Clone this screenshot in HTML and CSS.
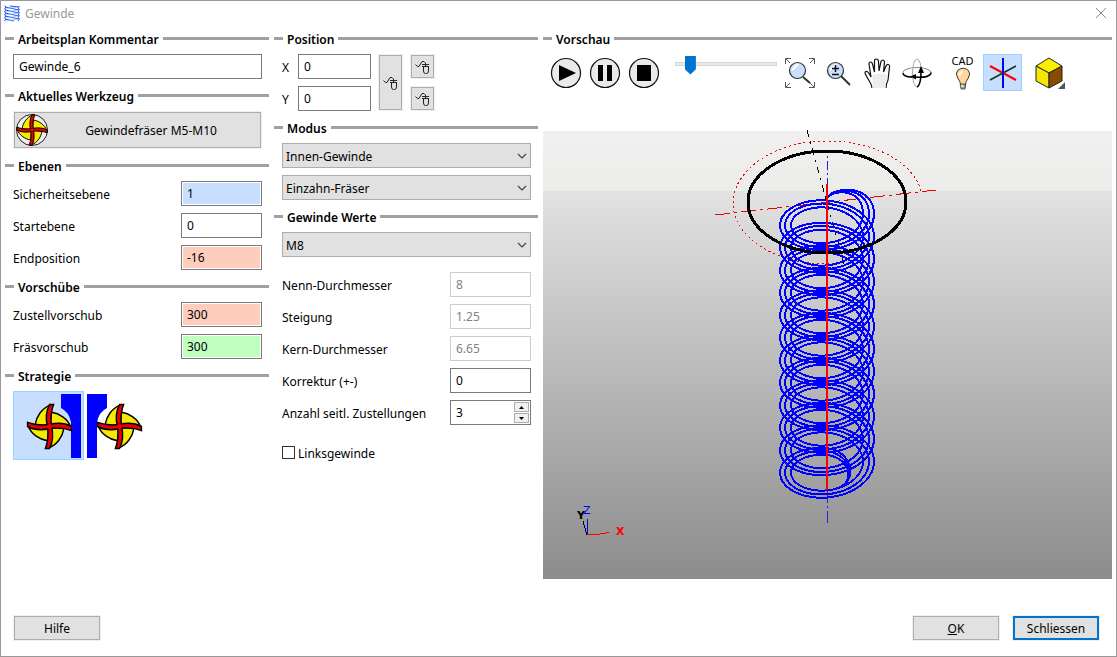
FILE: index.html
```html
<!DOCTYPE html>
<html lang="de">
<head>
  <meta charset="UTF-8">
  <meta name="viewport" content="width=device-width, initial-scale=1.0">
  <title>Gewinde</title>
  <link rel="stylesheet" href="styles.css">
</head>
<body>
<svg class="defs" width="0" height="0" aria-hidden="true">
  <symbol id="cutter" viewBox="-24 -24 48 48">
    <path id="blade" d="M0 0 L-14 -2 C-13 -9 -8 -18 1 -21 Z" fill="#f4ec00" stroke="#000" stroke-width="1.4"/>
    <use href="#blade" transform="rotate(90)"/>
    <use href="#blade" transform="rotate(180)"/>
    <use href="#blade" transform="rotate(270)"/>
    <path id="arm" d="M-2 0 C-4 -8 -3 -16 0 -21.500 L4 -21.500 C1 -14 1 -8 2 0" fill="#e60000" stroke="#000" stroke-width="1.4"/>
    <use href="#arm" transform="rotate(90)"/>
    <use href="#arm" transform="rotate(180)"/>
    <use href="#arm" transform="rotate(270)"/>
    <circle r="2.5" fill="#e60000"/>
  </symbol>
  <symbol id="mouse" viewBox="0 0 16 16">
    <path d="M0.500 5.500 L2.500 7.500 H4 L7 2.500 H9 L10.500 4 V5" fill="none" stroke="#222"/>
    <path d="M8.500 7.500 V12 Q8.500 14.500 10.500 14.500 H11.500 Q13.500 14.500 13.500 12 V7.500 M7 5.500 H14 M7 7.500 H14 M10.500 4 V7.500" fill="none" stroke="#222"/>
  </symbol>
  <symbol id="chevron" viewBox="0 0 10 6">
    <path d="M1 1 L5 5 L9 1" fill="none" stroke="#444" stroke-width="1.200"/>
  </symbol>
</svg>

<div class="dialog">
  <header class="titlebar">
    <svg class="app-icon" viewBox="0 0 16 17" fill="none" stroke="#1f55e8">
      <path d="M1 2 L15 5 M1 5 L15 8 M1 8 L15 11 M1 11 L15 14 M1 14 L10 16 M6 1 L15 2"/>
      <path d="M0.500 1 L2 2 L0.500 4 L2 5 L0.500 7 L2 8 L0.500 10 L2 11 L0.500 13 L2 14 L0.500 16 M15.500 1 L14 3 L15.500 5 L14 6 L15.500 8 L14 9 L15.500 11 L14 12 L15.500 14 L14 16"/>
      <path d="M1 4 L15 2 M1 7 L15 5 M1 10 L15 8 M1 13 L15 11 M1 16 L15 14" stroke="#8db4ff" stroke-width="0.600"/>
    </svg>
    <h1>Gewinde</h1>
    <button type="button" class="close" aria-label="Fenster schließen">
      <svg viewBox="0 0 12 12" width="12" height="12"><path d="M1 1 L11 11 M11 1 L1 11" stroke="#888" fill="none"/></svg>
    </button>
  </header>

  <main class="columns">
    <section class="column">
      <h2><label for="comment">Arbeitsplan Kommentar</label></h2>
      <div class="group">
        <input class="field wide" id="comment" type="text" value="Gewinde_6">
      </div>

      <h2>Aktuelles Werkzeug</h2>
      <div class="group">
        <button type="button" class="btn tool-btn">
          <svg class="tool-icon" viewBox="0 0 34 34">
            <circle cx="17" cy="17" r="15.500" fill="#eee" stroke="#222"/>
            <use href="#cutter" x="0" y="0" width="34" height="34"/>
          </svg>
          <span>Gewindefräser M5-M10</span>
        </button>
      </div>

      <h2>Ebenen</h2>
      <div class="group">
        <div class="row">
          <label for="safe">Sicherheitsebene</label>
          <input class="field blue" id="safe" type="text" value="1">
        </div>
        <div class="row">
          <label for="start">Startebene</label>
          <input class="field" id="start" type="text" value="0">
        </div>
        <div class="row">
          <label for="end">Endposition</label>
          <input class="field red" id="end" type="text" value="-16">
        </div>
      </div>

      <h2>Vorschübe</h2>
      <div class="group">
        <div class="row">
          <label for="feed-in">Zustellvorschub</label>
          <input class="field red" id="feed-in" type="text" value="300">
        </div>
        <div class="row">
          <label for="feed-mill">Fräsvorschub</label>
          <input class="field green" id="feed-mill" type="text" value="300">
        </div>
      </div>

      <h2>Strategie</h2>
      <div class="strategy">
        <button type="button" class="strategy-btn active" aria-label="Gleichlauf">
          <svg viewBox="0 0 69 67">
            <path d="M47 2 H67 V66 H57 V30 Q55 20 47 16 Z" fill="#00f"/>
            <use href="#cutter" x="11" y="10" width="49" height="49"/>
          </svg>
        </button>
        <button type="button" class="strategy-btn" aria-label="Gegenlauf">
          <svg viewBox="0 0 69 67">
            <path d="M2 2 H22 V16 Q14 20 12 30 V66 H2 Z" fill="#00f"/>
            <use href="#cutter" x="10" y="10" width="49" height="49"/>
          </svg>
        </button>
      </div>
    </section>

    <section class="column">
      <h2>Position</h2>
      <div class="group position">
        <div class="coords">
          <div class="coord">
            <label for="pos-x">X</label>
            <input class="field" id="pos-x" type="text" value="0">
          </div>
          <div class="coord">
            <label for="pos-y">Y</label>
            <input class="field" id="pos-y" type="text" value="0">
          </div>
        </div>
        <button type="button" class="btn pick tall" aria-label="X und Y wählen"><svg><use href="#mouse"/></svg></button>
        <div class="picks">
          <button type="button" class="btn pick" aria-label="X wählen"><svg><use href="#mouse"/></svg></button>
          <button type="button" class="btn pick" aria-label="Y wählen"><svg><use href="#mouse"/></svg></button>
        </div>
      </div>

      <h2>Modus</h2>
      <div class="group">
        <div class="select">
          <select aria-label="Gewindeart"><option>Innen-Gewinde</option><option>Außen-Gewinde</option></select>
          <svg><use href="#chevron"/></svg>
        </div>
        <div class="select">
          <select aria-label="Fräserart"><option>Einzahn-Fräser</option><option>Mehrzahn-Fräser</option></select>
          <svg><use href="#chevron"/></svg>
        </div>
      </div>

      <h2>Gewinde Werte</h2>
      <div class="group">
        <div class="select">
          <select aria-label="Gewindegröße"><option>M8</option><option>M10</option></select>
          <svg><use href="#chevron"/></svg>
        </div>
      </div>
      <div class="group values">
        <div class="row">
          <label for="nominal">Nenn-Durchmesser</label>
          <input class="field" id="nominal" type="text" value="8" disabled>
        </div>
        <div class="row">
          <label for="pitch">Steigung</label>
          <input class="field" id="pitch" type="text" value="1.25" disabled>
        </div>
        <div class="row">
          <label for="core">Kern-Durchmesser</label>
          <input class="field" id="core" type="text" value="6.65" disabled>
        </div>
        <div class="row">
          <label for="correction">Korrektur (+-)</label>
          <input class="field" id="correction" type="text" value="0">
        </div>
        <div class="row">
          <label for="passes">Anzahl seitl. Zustellungen</label>
          <div class="spinner">
            <input class="field" id="passes" type="number" value="3" min="1">
            <div class="spin-buttons">
              <button type="button" id="passes-up" aria-label="Mehr"><svg viewBox="0 0 5 3"><path d="M0 3 L2.500 0 L5 3 Z"/></svg></button>
              <button type="button" id="passes-down" aria-label="Weniger"><svg viewBox="0 0 5 3"><path d="M0 0 L2.500 3 L5 0 Z"/></svg></button>
            </div>
          </div>
        </div>
      </div>
      <label class="check"><input type="checkbox"><span>Linksgewinde</span></label>
    </section>

    <section class="column preview">
      <h2>Vorschau</h2>
      <div class="toolbar">
        <button type="button" class="icon-btn" aria-label="Start">
          <svg viewBox="0 0 32 32"><circle cx="16" cy="16" r="14.500" fill="#eaeaea" stroke="#111" stroke-width="1.200"/><path d="M9 8 V24 L26 16 Z"/></svg>
        </button>
        <button type="button" class="icon-btn" aria-label="Pause">
          <svg viewBox="0 0 32 32"><circle cx="16" cy="16" r="14.500" fill="#eaeaea" stroke="#111" stroke-width="1.200"/><path d="M9 8 H14 V24 H9 Z M18 8 H23 V24 H18 Z"/></svg>
        </button>
        <button type="button" class="icon-btn" aria-label="Stopp">
          <svg viewBox="0 0 32 32"><circle cx="16" cy="16" r="14.500" fill="#eaeaea" stroke="#111" stroke-width="1.200"/><path d="M9 8 H23 V24 H9 Z"/></svg>
        </button>
        <input class="speed" type="range" min="0" max="100" value="10" aria-label="Geschwindigkeit">
        <button type="button" class="icon-btn" aria-label="Alles zeigen">
          <svg viewBox="0 0 32 32" fill="none">
            <path d="M1.500 7 V1.500 H7 M2 2 L6 6 M25 1.500 H30.500 V7 M30 2 L26 6 M1.500 25 V30.500 H7 M2 30 L6 26 M25 30.500 H30.500 V25 M30 30 L26 26" stroke="#555"/>
            <path d="M19 20 L26 26" stroke="#333" stroke-width="2"/>
            <circle cx="13.500" cy="13.500" r="8" fill="#cbdffc" stroke="#333" stroke-width="1.200"/>
            <path d="M8 13 L14 7" stroke="#fff" stroke-width="2"/>
          </svg>
        </button>
        <button type="button" class="icon-btn" aria-label="Zoom">
          <svg viewBox="0 0 32 32" fill="none">
            <path d="M18 19 L27 28" stroke="#333" stroke-width="2"/>
            <circle cx="12.500" cy="13.500" r="8" fill="#cbdffc" stroke="#333" stroke-width="1.200"/>
            <path d="M7 13 L13 7" stroke="#fff" stroke-width="2"/>
            <path d="M12.500 8 V15 M9 11.500 H16 M9 17.500 H16" stroke="#111" stroke-width="1.500"/>
          </svg>
        </button>
        <button type="button" class="icon-btn" aria-label="Verschieben">
          <svg viewBox="0 0 32 32">
            <path d="M10 31 C10 27 6 23 4 18 Q2 15 4 14.500 Q6 14 9 20 L7 7 Q7 5 8.500 5 Q10 5 10.500 7 L12.500 15 V4 Q12.500 2 14.500 2 Q16 2 16.500 4 L17 14 L19 4.500 Q19.500 3 21 3 Q22.500 3.500 22.500 5 L21.500 15 L24 9 Q25 7 26.500 7.500 Q28 8 27.500 10 L26 23 Q24 27 24 31" fill="#fff" stroke="#111" stroke-width="1.200"/>
            <path d="M10.500 18 Q18 15 25.500 18 L25 24 Q23 27 23.500 31 H10.500 Z" fill="#ededed"/>
          </svg>
        </button>
        <button type="button" class="icon-btn" aria-label="Drehen">
          <svg viewBox="0 0 32 32" fill="none">
            <ellipse cx="16" cy="15.500" rx="14" ry="5" stroke="#888"/>
            <ellipse cx="16" cy="16" rx="4.500" ry="14" stroke="#aaa"/>
            <path d="M2 16 C2 19 6 20 11 20 M15 20 C24 21 30 19 30 15.500 M20 14 Q20 28 16 30" stroke="#000" stroke-width="1.500"/>
            <path d="M9 19.500 L15 17 V22.500 Z M20 9 L17 16 H23 Z" fill="#000"/>
          </svg>
        </button>
        <button type="button" class="icon-btn cad" aria-label="CAD einblenden">
          <span>CAD</span>
          <svg viewBox="0 0 16 24">
            <path d="M5.500 18 Q5 15 2.500 11.500 Q-0.500 7 2.500 3.500 Q8 -1 13.500 3.500 Q16.500 7 13.500 11.500 Q11 15 10.500 18 Z" fill="#ffd79a" stroke="#333"/>
            <path d="M3 8 Q4 4 8 4 Q8 8 4 10 Z" fill="#fff3dd"/>
            <path d="M5 18 H11 L10 23 H6 Z" fill="#999" stroke="#333" stroke-width="0.800"/>
            <path d="M6 18.500 H8.500 V21 H6 Z" fill="#dfff8a"/>
          </svg>
        </button>
        <button type="button" class="icon-btn axes active" aria-label="Achsen einblenden">
          <svg viewBox="0 0 32 32" fill="none">
            <path d="M3 23 L29 9" stroke="#123512" stroke-width="1.500"/>
            <path d="M3 9 L29 23" stroke="#f00" stroke-width="2"/>
            <path d="M16 1 V31" stroke="#00f" stroke-width="2"/>
          </svg>
        </button>
        <button type="button" class="icon-btn cube" aria-label="Ansicht">
          <svg viewBox="0 0 32 32" stroke="#222">
            <path d="M2 9 L15 1 L28 9 L15 16 Z" fill="#f8f000"/>
            <path d="M2 9 L15 16 V31 L2 24 Z" fill="#f4e800"/>
            <path d="M28 9 L15 16 V31 L28 24 Z" fill="#8a4b00"/>
            <path d="M31 25 V32 H24 Z" fill="#555" stroke="none"/>
          </svg>
        </button>
      </div>

      <div class="viewport">
        <svg viewBox="0 0 569 448" fill="none" shape-rendering="crispEdges" role="img" aria-label="Werkzeugweg">
          <path d="M378 60 C370 30 330 10 284 10 C230 10 190 40 190 72 C190 105 230 133 284 133 C292 133 298 132 304 130" stroke="#e00" stroke-dasharray="2 3"/>
          <path d="M172 84 L393 59" stroke="#e00" stroke-dasharray="15 4 3 4"/>
          <path d="M264 -1 L304 144" stroke="#000" stroke-dasharray="7 5 2 5"/>
          <path d="M284.500 25 V60" stroke="#22d" stroke-dasharray="2 3 9 3"/>
          <path d="M284.500 358 V392" stroke="#22d" stroke-dasharray="14 3 2 3"/>
          <g id="toolpath" stroke="#00f" stroke-width="2"></g>
          <ellipse cx="284" cy="71" rx="79" ry="51" stroke="#000" stroke-width="3"/>
          <path d="M284 53 V359" stroke="#f00" stroke-width="2"/>
          <path d="M44.500 404 V388" stroke="#00f"/>
          <path d="M44 403.500 H54 L66 401.500" stroke="#f00"/>
          <path d="M44 404 L40 390" stroke="#000"/>
          <text x="73" y="404" class="axis-label" fill="#f00">X</text>
          <text x="34" y="388" class="axis-label" fill="#000">Y</text>
          <text x="40" y="383" class="axis-label z" fill="#00f">Z</text>
        </svg>
      </div>
    </section>
  </main>

  <footer class="buttons">
    <button type="button" class="btn">Hilfe</button>
    <span class="spacer"></span>
    <button type="button" class="btn"><u>O</u>K</button>
    <button type="button" class="btn default">Schliessen</button>
  </footer>
</div>

<script src="script.js"></script>
</body>
</html>
```
FILE: styles.css
```css
* {
  box-sizing: border-box;
}
body {
  margin: 0;
  font-family: "Noto Sans", "Open Sans", sans-serif;
  font-size: 12px;
  line-height: 17px;
  color: #000;
  background: #fff;
}
button, input, select {
  font: inherit;
  color: inherit;
  margin: 0;
}
svg {
  display: block;
}
.defs {
  position: absolute;
}
.dialog {
  display: flex;
  flex-direction: column;
  min-height: 100vh;
  border: 1px solid #999;
}

/* title bar */
.titlebar {
  display: flex;
  align-items: center;
  gap: 5px;
  height: 24px;
  padding: 0 9px 0 3px;
}
.app-icon {
  width: 16px;
  height: 17px;
}
.titlebar h1 {
  flex: 1;
  margin: 0;
  font-size: 12px;
  font-weight: normal;
  color: #999;
}
.close {
  padding: 0;
  border: none;
  background: none;
}

/* columns */
.columns {
  flex: 1;
  display: grid;
  grid-template-columns: 264px 264px 1fr;
  gap: 5px;
  padding: 5px 4px 0;
}
.column {
  display: flex;
  flex-direction: column;
  min-width: 0;
}
h2 {
  display: flex;
  align-items: center;
  gap: 4px;
  margin: 8px 0 6px;
  padding-top: 1px;
  font-size: 12px;
  line-height: 17px;
  font-weight: 600;
}
h2:first-child {
  margin-top: 0;
}
h2::before, h2::after {
  content: "";
  height: 3px;
  margin-bottom: 2px;
  background: #a0a0a0;
}
h2::before {
  width: 9px;
}
h2::after {
  flex: 1;
}
.group {
  display: flex;
  flex-direction: column;
  gap: 7px;
  padding: 0 7px 0 8px;
}
.values {
  margin-top: 15px;
}
.row {
  display: flex;
  align-items: center;
  justify-content: space-between;
}
.row label, .coord label, .check span {
  padding-top: 2px;
}

/* fields */
.field {
  width: 81px;
  height: 25px;
  padding: 0 5px;
  border: 1px solid #7a7a7a;
  border-radius: 0;
  background: #fff;
  box-shadow: inset 0 0 0 1px #fff;
}
.field.wide {
  width: 100%;
}
.field.blue { background: #c8deff; }
.field.red { background: #ffcdbc; }
.field.green { background: #bfffbf; }
.field:disabled {
  border-color: #ccc;
  color: #838383;
}
.btn {
  min-width: 88px;
  height: 26px;
  padding: 0;
  border: 1px solid #f0f0f0;
  background: #e1e1e1;
  box-shadow: inset 0 0 0 1px #adadad;
}
.btn.default {
  box-shadow: inset 0 0 0 2px #0073cf;
}
.tool-btn {
  display: flex;
  align-items: center;
  width: 100%;
  height: 38px;
}
.tool-icon {
  width: 34px;
  height: 34px;
  margin-left: 1px;
}
.tool-btn span {
  flex: 1;
  padding-right: 8px;
}
.position {
  flex-direction: row;
  gap: 7px;
}
.coords, .picks {
  display: flex;
  flex-direction: column;
  gap: 7px;
}
.coord {
  display: flex;
  align-items: center;
}
.coord label {
  width: 16px;
}
.coord .field {
  width: 73px;
}
.pick {
  display: flex;
  align-items: center;
  justify-content: center;
  min-width: 25px;
  height: 25px;
}
.pick.tall {
  height: auto;
}
.pick svg {
  width: 16px;
  height: 16px;
}
.select {
  position: relative;
}
.select select {
  display: block;
  width: 100%;
  height: 25px;
  padding: 2px 20px 0 3px;
  border: 1px solid #adadad;
  border-radius: 0;
  background: #e1e1e1;
  appearance: none;
}
.select svg {
  position: absolute;
  top: 10px;
  right: 4px;
  width: 10px;
  height: 6px;
  pointer-events: none;
}
.spinner {
  display: flex;
  width: 81px;
  height: 25px;
  border: 1px solid #7a7a7a;
}
.spinner .field {
  flex: 1;
  width: 0;
  height: 23px;
  border: none;
  appearance: textfield;
}
.spinner .field::-webkit-inner-spin-button {
  display: none;
}
.spin-buttons {
  display: flex;
  flex-direction: column;
  gap: 1px;
  width: 17px;
  padding: 1px;
}
.spin-buttons button {
  display: flex;
  flex: 1;
  align-items: center;
  justify-content: center;
  padding: 0;
  border: 1px solid #adadad;
  background: #f0f0f0;
}
.spin-buttons svg {
  width: 5px;
  height: 3px;
}
.check {
  display: flex;
  align-items: center;
  gap: 3px;
  margin: 18px 8px 0;
}
.check input {
  width: 13px;
  height: 13px;
  border: 1px solid #333;
  background: #fff;
  appearance: none;
}
.check input:checked {
  background: #333;
  box-shadow: inset 0 0 0 2px #fff;
}
.strategy {
  display: flex;
  padding-left: 8px;
}
.strategy-btn {
  width: 71px;
  height: 69px;
  padding: 0;
  border: 1px solid transparent;
  background: none;
}
.strategy-btn.active, .icon-btn.active {
  border-color: #99d1ff;
  background: #c8deff;
}

/* preview */
.toolbar {
  display: flex;
  align-items: center;
  height: 37px;
  padding-left: 3px;
}
.icon-btn {
  display: flex;
  flex-direction: column;
  align-items: center;
  justify-content: center;
  flex: none;
  width: 39px;
  height: 37px;
  padding: 0;
  border: 1px solid transparent;
  background: none;
}
.icon-btn svg {
  width: 32px;
  height: 32px;
}
.icon-btn.cad {
  margin-left: 7px;
  font-size: 11px;
  line-height: 12px;
}
.icon-btn.cad svg {
  width: 16px;
  height: 24px;
}
.icon-btn.axes {
  margin-left: 1px;
}
.icon-btn.cube {
  margin-left: 8px;
}
.speed {
  width: 102px;
  height: 20px;
  margin: 0 3px 18px 12px;
  background: none;
  appearance: none;
}
.speed::-webkit-slider-runnable-track {
  height: 4px;
  border: 1px solid #d6d6d6;
  background: #e7eaea;
}
.speed::-webkit-slider-thumb {
  width: 11px;
  height: 19px;
  margin-top: -7px;
  background: #0073cf;
  clip-path: polygon(0 0, 100% 0, 100% 72%, 50% 100%, 0 72%);
  appearance: none;
}
.viewport {
  flex: 1;
  min-height: 0;
  margin-top: 40px;
  background: linear-gradient(#f0f0f0, #ececea 60px, #e2e2e2 60px, #8c8c8c);
}
.viewport svg {
  width: 100%;
  height: auto;
  overflow: visible;
}
.axis-label {
  font: bold 11px "DejaVu Sans", sans-serif;
}
.axis-label.z {
  font-weight: normal;
}

/* footer */
.buttons {
  display: flex;
  gap: 12px;
  padding: 36px 16px 15px 12px;
}
.spacer {
  flex: 1;
}
```
FILE: script.js
```javascript
const toolpath = document.getElementById('toolpath');
const passes = document.getElementById('passes');

// one helix per pass, each a little closer to the final diameter
function drawPass(rx) {
  const cx = 284;
  const ry = rx * 0.646;
  const rise = 22.5;
  const end = 23.5 * Math.PI;
  const top = 54 + (47 - rx) / 3;
  let d = `M${cx} 67 C${cx + 8} ${top} ${cx + rx} ${top} ${cx + rx} 83`;
  for (let t = 0; t <= end; t += Math.PI / 30) {
    const x = cx + rx * Math.cos(t);
    const y = 83 + rise * t / (2 * Math.PI) + ry * Math.sin(t);
    d += ` L${x.toFixed(1)} ${y.toFixed(1)}`;
  }
  const r = 17 + rx / 4;
  d += ` C${cx + r} ${347 - ry} ${cx + r + 6} 359 ${cx} 359`;
  const path = document.createElementNS('http://www.w3.org/2000/svg', 'path');
  path.setAttribute('d', d);
  toolpath.appendChild(path);
}

[36, 42, 47].forEach(drawPass);

document.getElementById('passes-up').addEventListener('click', () => passes.stepUp());
document.getElementById('passes-down').addEventListener('click', () => passes.stepDown());
```
